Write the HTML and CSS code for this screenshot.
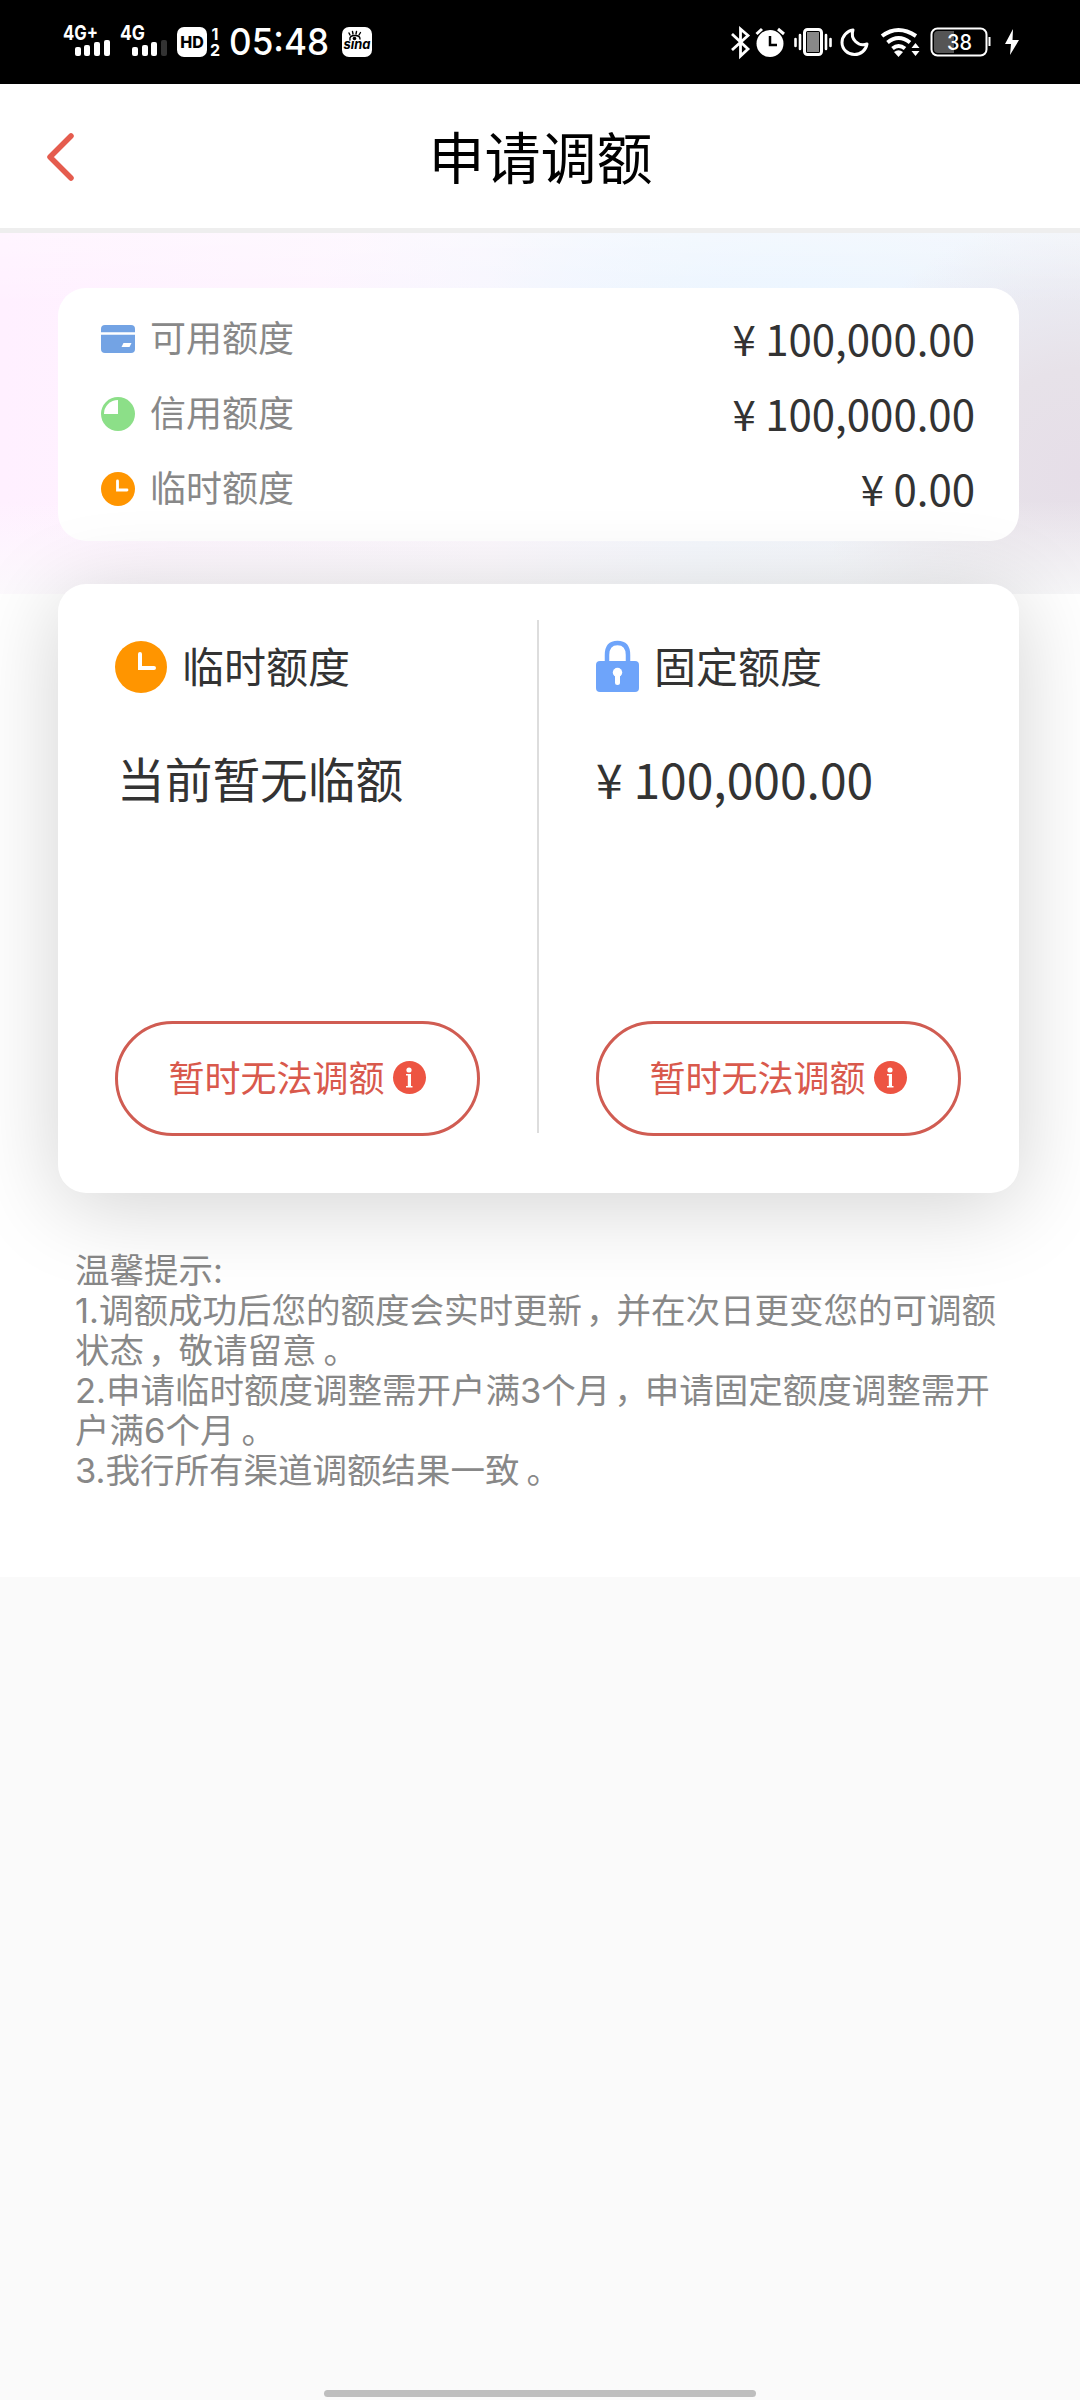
FILE: index.html
```html
<!DOCTYPE html>
<html lang="zh-CN">
<head>
<meta charset="utf-8">
<title>申请调额</title>
<link rel="stylesheet" href="styles.css">
</head>
<body>
<div class="status">
  <svg class="signals" width="112" height="36" viewBox="0 0 112 36">
    <g class="net"><text x="0" y="16" textLength="35" lengthAdjust="spacingAndGlyphs">4G+</text><text x="57" y="16" textLength="25" lengthAdjust="spacingAndGlyphs">4G</text></g>
    <g fill="#fff"><rect x="12" y="23" width="6" height="9" rx="2"/><rect x="21" y="21" width="6" height="11" rx="2"/><rect x="31" y="18" width="6" height="14" rx="2"/><rect x="41" y="16" width="6" height="16" rx="2"/>
    <rect x="69" y="23" width="6" height="9" rx="2"/><rect x="79" y="21" width="6" height="11" rx="2"/><rect x="88" y="18" width="6" height="14" rx="2"/></g>
    <rect x="98" y="16" width="6" height="16" rx="2" fill="#333"/>
  </svg>
  <span class="hd">HD</span>
  <span class="sims"><span>1</span><span>2</span></span>
  <svg class="time" width="101" height="46" viewBox="0 0 101 46"><text x="0" y="36" textLength="100" lengthAdjust="spacingAndGlyphs">05:48</text></svg>
  <svg class="sina" width="30" height="30" viewBox="0 0 30 30">
    <rect width="30" height="30" rx="7" fill="#fff"/>
    <g fill="none" stroke="#000" stroke-width="1.4" stroke-linecap="round"><path d="M8 13Q7 8.500 13 8.500Q18 8.500 18 12"/><path d="M8 8L7 6M11 7L10.500 4.500M14 7L14.500 4.500M17 8L18.500 5.500"/></g>
    <circle cx="12.500" cy="11.500" r="1.800"/>
    <text x="1.500" y="22" class="sina-text" textLength="27" lengthAdjust="spacingAndGlyphs">sına</text>
  </svg>
  <svg class="tray" width="290" height="32" viewBox="0 0 290 32">
    <path d="M1 7L17 22L9.500 29V2L17 8.500L1 23" fill="none" stroke="#fff" stroke-width="2.800"/>
    <circle cx="39" cy="16.500" r="13.500" fill="#fff"/><path d="M25.500 7L31 2M47 2L53 7" stroke="#fff" stroke-width="3"/><path d="M39 9V18H46" fill="none" stroke="#000" stroke-width="2.500"/>
    <rect x="73.500" y="2.500" width="17" height="25" rx="3" fill="#000" stroke="#fff" stroke-width="3"/><rect x="76" y="5" width="12" height="20" fill="#888"/>
    <path d="M64.500 12V19M69 8V22M95 8V22M99.500 12V19" stroke="#fff" stroke-width="2.600" stroke-linecap="round"/>
    <path d="M122 3C116 4 111 9 111 15.500C111 22.500 117 27.500 123.500 27.500C130 27.500 135 23 136 17C127 20 119 12 122 3Z" fill="none" stroke="#fff" stroke-width="3" stroke-linejoin="round"/>
    <g fill="none" stroke="#fff" stroke-width="4"><path d="M151 9Q167 -3 185 9"/><path d="M156.500 15.500Q167.500 6.500 179 15.500"/><path d="M161.500 21.500Q167.500 16.500 174 21.500"/></g><path d="M163 25Q167.500 21.500 172 25L167.500 30Z" fill="#fff"/>
    <path d="M180.500 21L184.500 16L188.500 21ZM180.500 24L184.500 29L188.500 24Z" fill="#fff"/>
    <rect x="200.500" y="1.500" width="55" height="27" rx="6" fill="#000" stroke="#fff" stroke-width="2"/><path d="M207 4H223V26H207Q203 26 203 22V8Q203 4 207 4Z" fill="#555"/><path d="M258.500 10V19" stroke="#fff" stroke-width="2"/>
    <text x="216" y="22.500" class="level" textLength="25" lengthAdjust="spacingAndGlyphs">38</text>
    <path d="M282 2L274 17H280L279 28L288 13H281.500Z" fill="#fff"/>
  </svg>
</div>
<header class="nav">
  <svg class="back" width="28" height="48" viewBox="0 0 28 48"><path d="M24 3L3 24L24 45" fill="none" stroke="#e55c4e" stroke-width="5.500" stroke-linecap="round" stroke-linejoin="round"/></svg>
  <h1>申请调额</h1>
</header>
<main>
  <div class="hero">
    <section class="summary">
      <div class="row"><svg width="34" height="34" viewBox="0 0 34 34"><rect y="3" width="34" height="28" rx="4" fill="#73a3e4"/><path d="M0 11.500H34" stroke="#fff" stroke-width="2.500"/><path d="M22.500 21H30.500L28.500 25H20.500Z" fill="#fff"/></svg><span class="label">可用额度</span><span class="amount">¥ 100,000.00</span></div>
      <div class="row"><svg width="34" height="34" viewBox="0 0 34 34"><circle cx="17" cy="17" r="17" fill="#8cdf88"/><path d="M17 3V17H3A14 14 0 0 1 17 3Z" fill="#fff"/></svg><span class="label">信用额度</span><span class="amount">¥ 100,000.00</span></div>
      <div class="row"><svg width="34" height="34" viewBox="0 0 34 34"><circle cx="17" cy="17" r="17" fill="#ff9500"/><path d="M16.500 9V18H26" fill="none" stroke="#fff" stroke-width="2.800" stroke-linecap="round"/></svg><span class="label">临时额度</span><span class="amount">¥ 0.00</span></div>
    </section>
  </div>
  <section class="panel">
    <div class="col">
      <h2><svg width="52" height="52" viewBox="0 0 52 52"><circle cx="26" cy="26" r="26" fill="#ff9500"/><path d="M25 13V27H39" fill="none" stroke="#fff" stroke-width="4" stroke-linecap="round"/></svg><span>临时额度</span></h2>
      <p class="value">当前暂无临额</p>
      <button><span>暂时无法调额</span><svg width="33" height="33" viewBox="0 0 33 33"><circle cx="16.500" cy="16.500" r="16.500" fill="#ed5442"/><circle cx="16" cy="9" r="2.600" fill="#fff"/><path d="M13 13H18V25H19.500V26.500H13V25H14.800V14.500H13Z" fill="#fff"/></svg></button>
    </div>
    <div class="divider"></div>
    <div class="col fixed">
      <h2><svg width="43" height="52" viewBox="0 0 43 52"><path d="M11 20V14Q11 2 21.500 2Q32 2 32 14V20" fill="none" stroke="#6ea4fa" stroke-width="4.500"/><rect y="20" width="43" height="31" rx="4" fill="#6ea4fa"/><circle cx="21.500" cy="31.500" r="4.700" fill="#fff"/><path d="M21.500 32V41.500" stroke="#fff" stroke-width="5" stroke-linecap="round"/></svg><span>固定额度</span></h2>
      <p class="value">¥ 100,000.00</p>
      <button><span>暂时无法调额</span><svg width="33" height="33" viewBox="0 0 33 33"><circle cx="16.500" cy="16.500" r="16.500" fill="#ed5442"/><circle cx="16" cy="9" r="2.600" fill="#fff"/><path d="M13 13H18V25H19.500V26.500H13V25H14.800V14.500H13Z" fill="#fff"/></svg></button>
    </div>
  </section>
  <section class="tips">
    <p>温馨提示:</p>
    <p>1.调额成功后您的额度会实时更新<span class="comma">，</span>并在次日更变您的可调额</p>
    <p>状态<span class="comma">，</span>敬请留意<span class="stop">。</span></p>
    <p>2.申请临时额度调整需开户满3个月<span class="comma">，</span>申请固定额度调整需开</p>
    <p>户满6个月<span class="stop">。</span></p>
    <p>3.我行所有渠道调额结果一致<span class="stop">。</span></p>
  </section>
</main>
<footer><div class="home"></div></footer>
</body>
</html>
```
FILE: styles.css
```css
* { box-sizing: border-box; margin: 0; padding: 0; }
body { width: 1080px; height: 2400px; display: flex; flex-direction: column; overflow: hidden; background: #fafafa; color: #333; font-family: "Noto Sans CJK SC", sans-serif; }
svg { display: block; flex: none; overflow: visible; }
.status { height: 84px; background: #000; color: #fff; display: flex; align-items: flex-start; padding: 0 0 0 63px; flex: none; }
.signals { margin-top: 24px; }
.net text { font: 700 20px Inter, sans-serif; fill: #fff; }
.hd { width: 30px; height: 30px; margin: 27px 0 0 2px; border-radius: 7px; background: #fff; color: #000; font: 800 16px/30px Inter, sans-serif; text-align: center; }
.sims { width: 12px; margin: 26px 0 0 2px; display: flex; flex-direction: column; font: 700 16px/16px Inter, sans-serif; text-align: center; }
.time { margin: 19px 0 0 8px; }
.time text { font: 500 37px Inter, sans-serif; fill: #fff; }
.sina { margin: 27px 0 0 12px; }
.sina-text { font: italic 700 13px Inter, sans-serif; }
.tray { margin: 27px 0 0 359px; }
.level { font: 500 21px Inter, sans-serif; fill: #fff; }
.nav { height: 149px; flex: none; display: grid; grid-template-columns: 1fr auto 1fr; background: #fff; border-bottom: 5px solid #eee; padding: 0 46px 0 47px; }
.back { margin-top: 49px; }
.nav h1 { font-size: 56px; font-weight: 400; line-height: 80px; color: #000; margin-top: 31px; }
main { height: 1344px; flex: none; background: #fff; overflow: hidden; }
.hero { height: 361px; padding: 55px 61px 0 58px; background:
  linear-gradient(180deg, rgba(255,255,255,.35) 0%, rgba(255,255,255,0) 20%),
  linear-gradient(180deg, rgba(255,255,255,0) 74%, rgba(252,253,253,.75) 100%),
  radial-gradient(ellipse 260px 260px at 1080px 240px, #e6dee8 0%, #e7e2e9 40%, rgba(231,226,233,0) 100%),
  radial-gradient(ellipse 480px 260px at 800px 60px, #ebf5ff 0%, rgba(235,245,255,0) 100%),
  linear-gradient(90deg, #fff0ff 0%, #fdf6fe 45%, #f1f5fd 65%, #eff0f6 100%); }
.summary { height: 253px; padding: 13px 44px 0 43px; background: #fff; border-radius: 28px; }
.row { height: 75px; display: flex; align-items: center; }
.label { font-size: 36px; color: #888; margin-left: 15px; padding-bottom: 5px; }
.amount { font-size: 42px; margin-left: auto; padding-bottom: 2px; }
.panel { position: relative; width: 961px; height: 609px; margin: -10px 0 0 58px; padding: 0 58px 0 57px; display: flex; background: #fff; border-radius: 28px; box-shadow: 0 12px 88px rgba(0,0,0,.18); }
.divider { width: 2px; height: 513px; margin: 36px 57px 0 57px; background: #ddd; }
.col { width: 365px; padding-top: 57px; }
.col h2 { display: flex; align-items: center; height: 52px; font-size: 42px; font-weight: 400; gap: 15px; }
.col h2 span { padding-bottom: 6px; }
.value { font-size: 47.7px; line-height: 70px; margin-top: 50px; padding-left: 2px; white-space: nowrap; }
.fixed .value { font-size: 48px; padding-left: 0; }
.col button { width: 365px; height: 115px; margin-top: 208px; border: 3px solid #d05c52; border-radius: 58px; background: #fff; color: #d9594c; font: 400 36px "Noto Sans CJK SC", sans-serif; display: flex; align-items: center; justify-content: center; gap: 8px; padding: 0 1px 2px 0; white-space: nowrap; }
.col button span { padding-bottom: 4px; }
.tips { padding: 58px 0 0 75px; font: 400 34.5px/40px Inter, "Noto Sans CJK SC", sans-serif; color: #888; white-space: nowrap; }
.tips p { height: 40px; }
.comma { margin: 0 -4px 0 4px; }
.stop { margin-left: 7px; }
footer { flex: 1; display: flex; align-items: flex-end; justify-content: center; padding-bottom: 3px; }
.home { width: 432px; height: 7px; border-radius: 4px; background: #bebebe; }
```
